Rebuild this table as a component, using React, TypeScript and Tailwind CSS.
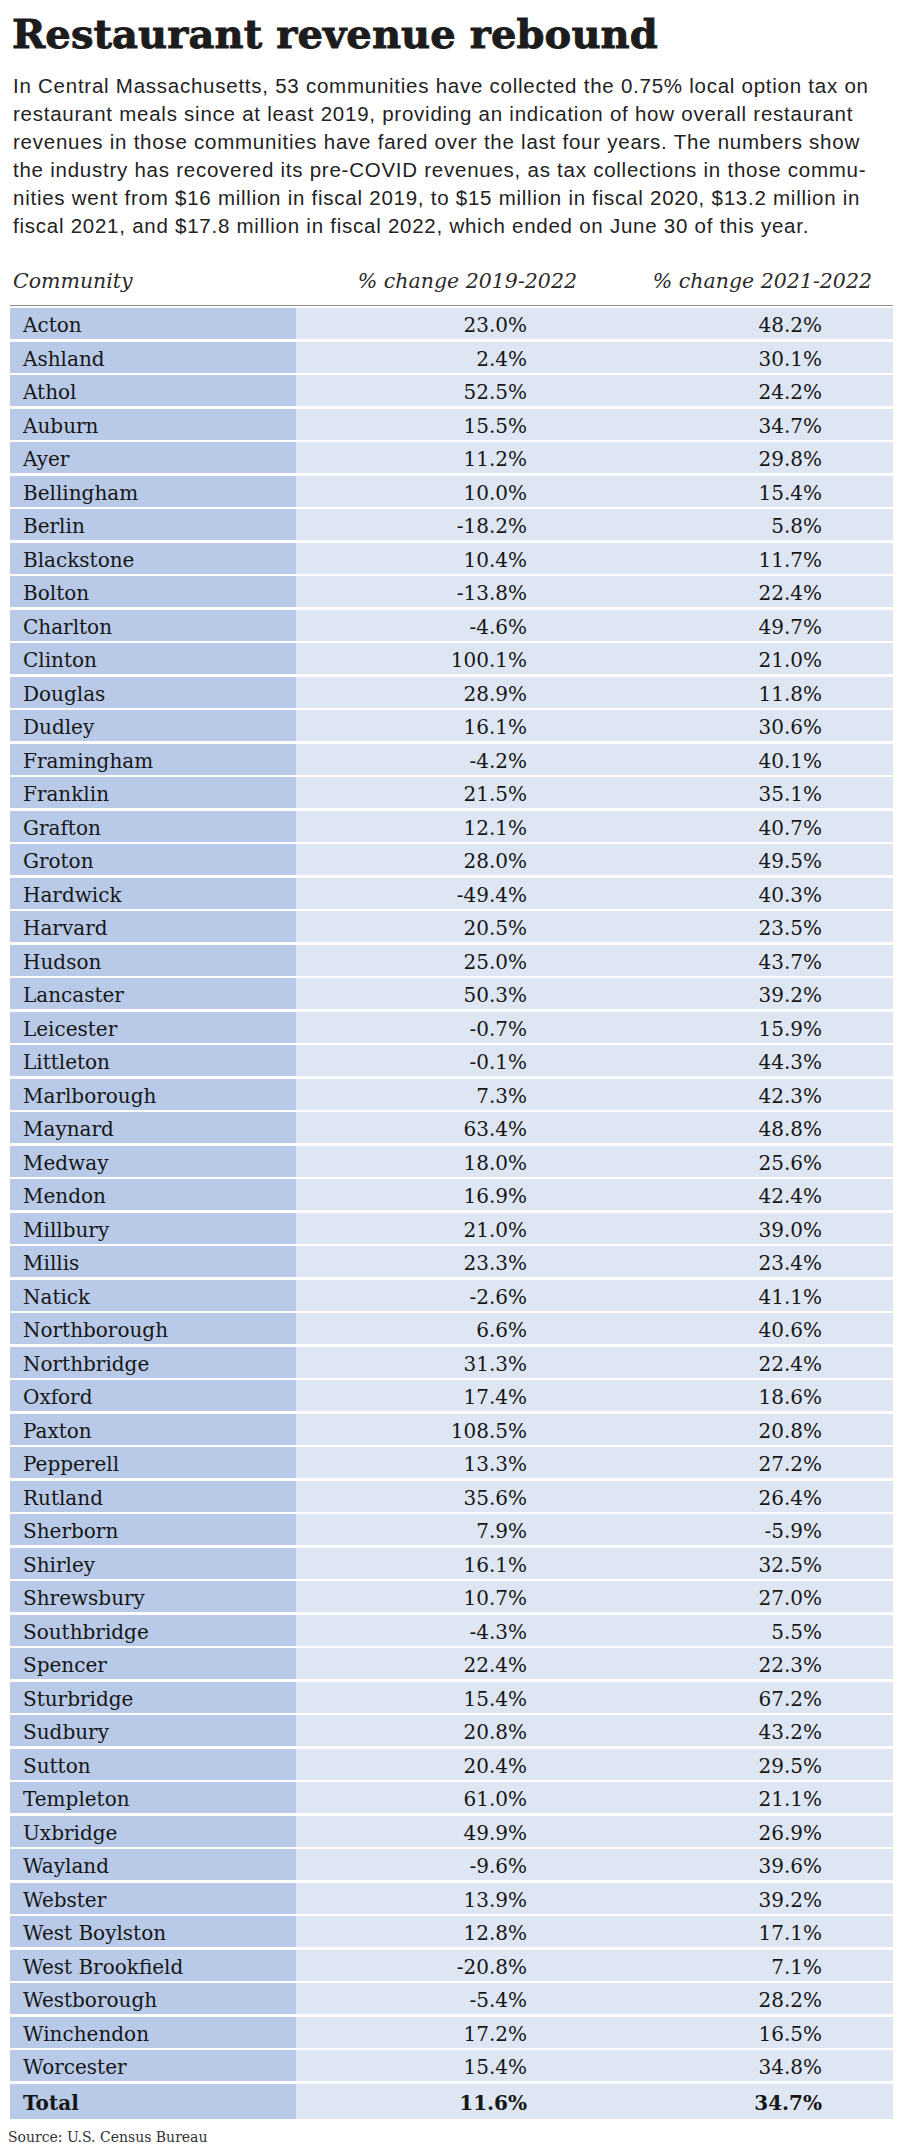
const rows: [string, string, string][] = [
  ['Acton', '23.0%', '48.2%'],
  ['Ashland', '2.4%', '30.1%'],
  ['Athol', '52.5%', '24.2%'],
  ['Auburn', '15.5%', '34.7%'],
  ['Ayer', '11.2%', '29.8%'],
  ['Bellingham', '10.0%', '15.4%'],
  ['Berlin', '-18.2%', '5.8%'],
  ['Blackstone', '10.4%', '11.7%'],
  ['Bolton', '-13.8%', '22.4%'],
  ['Charlton', '-4.6%', '49.7%'],
  ['Clinton', '100.1%', '21.0%'],
  ['Douglas', '28.9%', '11.8%'],
  ['Dudley', '16.1%', '30.6%'],
  ['Framingham', '-4.2%', '40.1%'],
  ['Franklin', '21.5%', '35.1%'],
  ['Grafton', '12.1%', '40.7%'],
  ['Groton', '28.0%', '49.5%'],
  ['Hardwick', '-49.4%', '40.3%'],
  ['Harvard', '20.5%', '23.5%'],
  ['Hudson', '25.0%', '43.7%'],
  ['Lancaster', '50.3%', '39.2%'],
  ['Leicester', '-0.7%', '15.9%'],
  ['Littleton', '-0.1%', '44.3%'],
  ['Marlborough', '7.3%', '42.3%'],
  ['Maynard', '63.4%', '48.8%'],
  ['Medway', '18.0%', '25.6%'],
  ['Mendon', '16.9%', '42.4%'],
  ['Millbury', '21.0%', '39.0%'],
  ['Millis', '23.3%', '23.4%'],
  ['Natick', '-2.6%', '41.1%'],
  ['Northborough', '6.6%', '40.6%'],
  ['Northbridge', '31.3%', '22.4%'],
  ['Oxford', '17.4%', '18.6%'],
  ['Paxton', '108.5%', '20.8%'],
  ['Pepperell', '13.3%', '27.2%'],
  ['Rutland', '35.6%', '26.4%'],
  ['Sherborn', '7.9%', '-5.9%'],
  ['Shirley', '16.1%', '32.5%'],
  ['Shrewsbury', '10.7%', '27.0%'],
  ['Southbridge', '-4.3%', '5.5%'],
  ['Spencer', '22.4%', '22.3%'],
  ['Sturbridge', '15.4%', '67.2%'],
  ['Sudbury', '20.8%', '43.2%'],
  ['Sutton', '20.4%', '29.5%'],
  ['Templeton', '61.0%', '21.1%'],
  ['Uxbridge', '49.9%', '26.9%'],
  ['Wayland', '-9.6%', '39.6%'],
  ['Webster', '13.9%', '39.2%'],
  ['West Boylston', '12.8%', '17.1%'],
  ['West Brookfield', '-20.8%', '7.1%'],
  ['Westborough', '-5.4%', '28.2%'],
  ['Winchendon', '17.2%', '16.5%'],
  ['Worcester', '15.4%', '34.8%'],
];

const intro = [
  'In Central Massachusetts, 53 communities have collected the 0.75% local option tax on',
  'restaurant meals since at least 2019, providing an indication of how overall restaurant',
  'revenues in those communities have fared over the last four years. The numbers show',
  'the industry has recovered its pre-COVID revenues, as tax collections in those commu-',
  'nities went from $16 million in fiscal 2019, to $15 million in fiscal 2020, $13.2 million in',
  'fiscal 2021, and $17.8 million in fiscal 2022, which ended on June 30 of this year.',
];

function Row({ name, a, b, total }: { name: string; a: string; b: string; total?: boolean }) {
  return (
    <div className={`flex ${total ? 'h-[35px] font-bold' : 'h-[31px]'} items-center text-[20px] text-[#161616]`}>
      <div className="h-full w-[286px] bg-[#b8cae7] pl-[13px] pt-[3px] flex items-center whitespace-nowrap">{name}</div>
      <div className="h-full flex-1 bg-[#dee6f3] flex items-center pt-[3px]">
        <div className="w-[231px] text-right">{a}</div>
        <div className="w-[295px] text-right">{b}</div>
      </div>
    </div>
  );
}

export default function App() {
  return (
    <div className="w-[900px] min-h-[2155px] bg-white text-[#1c1c1c]">
      <h1 className="pl-[12px] pt-[15px] text-[40px] leading-[38px] font-bold tracking-[0.1px] [-webkit-text-stroke:0.9px_#1c1c1c] font-['DejaVu_Serif',serif]">
        Restaurant revenue rebound
      </h1>

      <div className="mt-[19px] pl-[13px] text-[20.5px] leading-[28px] tracking-[0.75px] text-[#222] font-['Liberation_Sans',Arial,sans-serif]">
        {intro.map((line) => (
          <div key={line} className="whitespace-nowrap">{line}</div>
        ))}
      </div>

      <div className="mx-[10px] w-[883px] mt-[30px] font-['DejaVu_Serif',serif]">
        <div className="flex h-[36px] items-end pb-[8px] italic text-[20.5px] text-[#2a2a2a] border-b-[1.5px] border-[#8d8d8d] whitespace-nowrap">
          <div className="w-[286px] pl-[3px]">Community</div>
          <div className="w-[281px] text-right">% change 2019-2022</div>
          <div className="w-[295px] text-right">% change 2021-2022</div>
        </div>

        <div className="mt-[2px] flex flex-col gap-[2.5px]">
          {rows.map(([n, a, b]) => (
            <Row key={n} name={n} a={a} b={b} />
          ))}
          <Row name="Total" a="11.6%" b="34.7%" total />
        </div>
      </div>

      <div className="pl-[8px] mt-[8px] text-[14px] text-[#333] font-['DejaVu_Serif',serif]">
        Source: U.S. Census Bureau
      </div>
    </div>
  );
}
